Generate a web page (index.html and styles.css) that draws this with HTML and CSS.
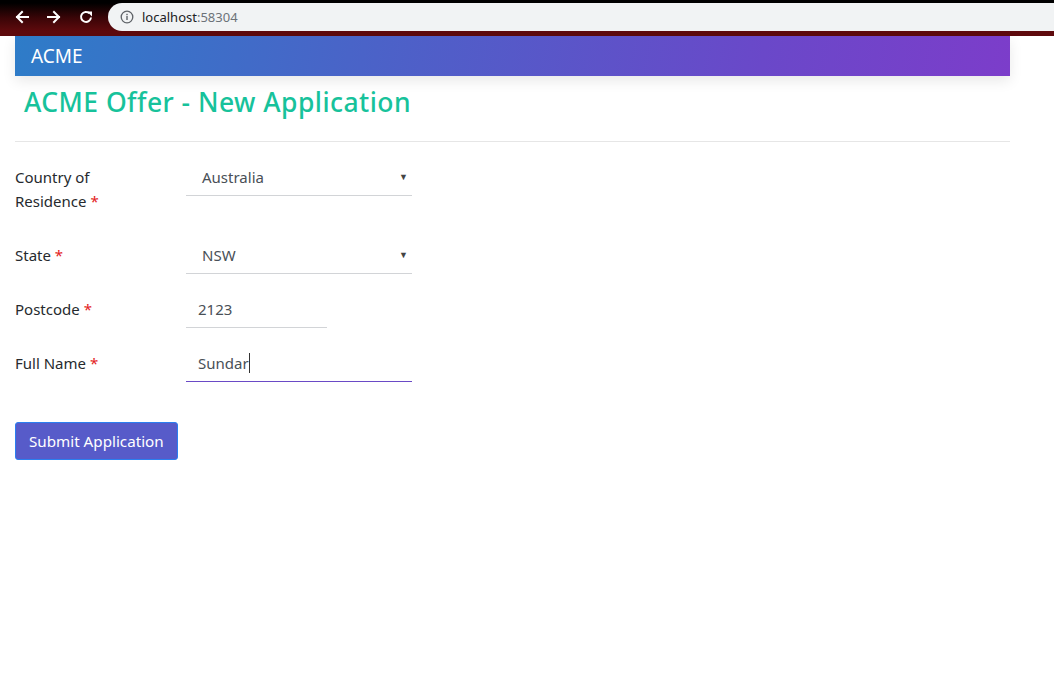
FILE: index.html
```html
<!DOCTYPE html>
<html lang="en">
<head>
<meta charset="utf-8">
<title>ACME Offer - New Application</title>
<link rel="stylesheet" href="styles.css">
</head>
<body>
<div class="chrome">
  <div class="nav-buttons">
    <svg class="nav-icon" viewBox="0 0 16 16" width="16" height="16"><path d="M14 8H3M8 3L3 8l5 5" fill="none" stroke="#fff" stroke-width="2" stroke-linecap="square"/></svg>
    <svg class="nav-icon" viewBox="0 0 16 16" width="16" height="16"><path d="M2 8h11M8 3l5 5-5 5" fill="none" stroke="#fff" stroke-width="2" stroke-linecap="square"/></svg>
    <svg class="nav-icon" viewBox="0 0 16 16" width="16" height="16"><path d="M13 8.5A5 5 0 1 1 11.5 4.3" fill="none" stroke="#fff" stroke-width="2"/><path d="M9 2.5h5v5z" fill="#fff"/></svg>
  </div>
  <div class="omnibox">
    <svg class="info-icon" viewBox="0 0 14 14" width="14" height="14"><circle cx="7" cy="7" r="5.8" fill="none" stroke="#5f6368" stroke-width="1.3"/><rect x="6.3" y="6" width="1.4" height="4" fill="#5f6368"/><rect x="6.3" y="3.8" width="1.4" height="1.4" fill="#5f6368"/></svg>
    <span class="host">localhost</span><span class="port">:58304</span>
  </div>
</div>
<div class="page">
  <header class="topbar">ACME</header>
  <h1 class="title">ACME Offer - New Application</h1>
  <hr class="divider">
  <form class="app-form">
    <div class="row">
      <label class="label">Country of Residence <span class="req">*</span></label>
      <div class="field select wide"><span>Australia</span><span class="caret">▼</span></div>
    </div>
    <div class="row">
      <label class="label">State <span class="req">*</span></label>
      <div class="field select wide"><span>NSW</span><span class="caret">▼</span></div>
    </div>
    <div class="row">
      <label class="label">Postcode <span class="req">*</span></label>
      <div class="field text narrow"><span>2123</span></div>
    </div>
    <div class="row">
      <label class="label">Full Name <span class="req">*</span></label>
      <div class="field text wide focused"><span>Sundar</span><span class="cursor"></span></div>
    </div>
    <div class="actions">
      <button type="button" class="submit">Submit Application</button>
    </div>
  </form>
</div>
</body>
</html>
```

FILE: styles.css
```css
html, body {
  margin: 0;
  padding: 0;
  background: #fff;
}
body {
  font-family: "Noto Sans", "Open Sans", sans-serif;
  color: #212529;
}
.chrome {
  height: 36px;
  display: flex;
  align-items: flex-start;
  background: linear-gradient(to bottom, #000 0px, #000 3px, #3a0507 18px, #5e0a0d 31px, #5e0a0d 36px);
}
.nav-buttons {
  width: 108px;
  height: 36px;
  display: flex;
  align-items: center;
  padding-left: 14px;
  gap: 16px;
  box-sizing: border-box;
  padding-bottom: 2px;
}
.nav-icon {
  display: block;
}
.omnibox {
  flex: 1;
  margin-top: 3px;
  height: 28px;
  background: #f1f3f4;
  border-radius: 14px 0 0 14px;
  display: flex;
  align-items: center;
  padding-left: 12px;
  font-family: "Noto Sans", sans-serif;
  font-size: 13px;
}
.info-icon {
  margin-right: 8px;
}
.host { color: #202124; }
.port { color: #6c7278; }

.page {
  padding: 0 44px 0 15px;
}
.topbar {
  height: 40px;
  box-sizing: border-box;
  padding-left: 16px;
  display: flex;
  align-items: center;
  color: #fff;
  font-size: 19px;
  background: linear-gradient(100deg, #2e7cc8 0%, #4a63c8 35%, #6a48c9 75%, #7c3dca 100%);
  box-shadow: 0 5px 14px rgba(0, 0, 0, 0.09);
}
.title {
  margin: 10px 0 0 9px;
  font-size: 26.5px;
  line-height: 32px;
  font-weight: 500;
  letter-spacing: 0.45px;
  color: #17c29b;
}
.divider {
  margin: 23px 0 0 0;
  border: 0;
  border-top: 1px solid #e6e6e6;
}
.app-form {
  padding-top: 16px;
  font-size: 15px;
}
.row {
  display: flex;
  align-items: flex-start;
  margin-bottom: 16px;
}
.label {
  width: 171px;
  box-sizing: border-box;
  padding: 7px 30px 7px 0;
  line-height: 24px;
  color: #262a2e;
}
.req { color: #e32222; }
.field {
  height: 38px;
  box-sizing: border-box;
  border-bottom: 1px solid #d2d4d7;
  display: flex;
  align-items: center;
  color: #495057;
}
.field.wide { width: 226px; }
.field.narrow { width: 141px; }
.field.select { padding-left: 16px; padding-right: 4px; justify-content: space-between; }
.field.text { padding-left: 12px; }
.caret {
  font-size: 9px;
  color: #444;
}
.field.focused {
  border-bottom-color: #6a4ac6;
}
.cursor {
  display: inline-block;
  width: 1px;
  height: 20px;
  background: #333;
  margin-left: 0;
}
.actions {
  padding-top: 24px;
}
.submit {
  height: 38px;
  padding: 0 13px 0 13px;
  font-family: "Noto Sans", sans-serif;
  font-size: 15.2px;
  color: #fff;
  background: #575bc9;
  border: 1px solid #2b7ff0;
  border-radius: 3px;
}
```
